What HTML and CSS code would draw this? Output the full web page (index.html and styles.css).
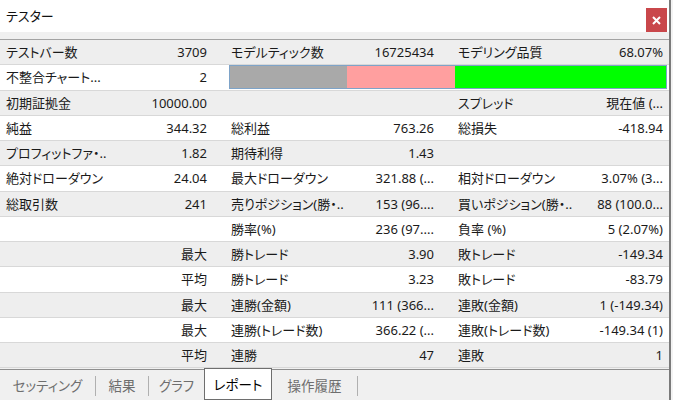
FILE: index.html
```html
<!DOCTYPE html>
<html lang="ja">
<head>
<meta charset="utf-8">
<title>テスター</title>
<link rel="stylesheet" href="styles.css">
</head>
<body>
<div class="window">
  <div class="titlebar">
    <span class="title">テスター</span>
    <div class="close"><svg width="9" height="9" viewBox="0 0 9 9"><path d="M1 1 L8 8 M8 1 L1 8" stroke="#fff" stroke-width="2" fill="none"/></svg></div>
  </div>
  <div class="strip"></div>
  <div class="table">
    <div class="row alt"><span class="lab c1">テストバー数</span><span class="val c2">3709</span><span class="lab c3">モデルティック数</span><span class="val c4">16725434</span><span class="lab c5">モデリング品質</span><span class="val c6">68.07%</span></div>
    <div class="row"><span class="lab c1">不整合チャート...</span><span class="val c2">2</span><div class="bar"><span class="seg gray"></span><span class="seg pink"></span><span class="seg green"></span></div></div>
    <div class="row alt"><span class="lab c1">初期証拠金</span><span class="val c2">10000.00</span><span class="lab c3"></span><span class="val c4"></span><span class="lab c5">スプレッド</span><span class="val c6">現在値 (...</span></div>
    <div class="row"><span class="lab c1">純益</span><span class="val c2">344.32</span><span class="lab c3">総利益</span><span class="val c4">763.26</span><span class="lab c5">総損失</span><span class="val c6">-418.94</span></div>
    <div class="row alt"><span class="lab c1">プロフィットファ・..</span><span class="val c2">1.82</span><span class="lab c3">期待利得</span><span class="val c4">1.43</span><span class="lab c5"></span><span class="val c6"></span></div>
    <div class="row"><span class="lab c1">絶対ドローダウン</span><span class="val c2">24.04</span><span class="lab c3">最大ドローダウン</span><span class="val c4">321.88 (...</span><span class="lab c5">相対ドローダウン</span><span class="val c6">3.07% (3...</span></div>
    <div class="row alt"><span class="lab c1">総取引数</span><span class="val c2">241</span><span class="lab c3">売りポジション(勝・..</span><span class="val c4">153 (96....</span><span class="lab c5">買いポジション(勝・..</span><span class="val c6">88 (100.0...</span></div>
    <div class="row"><span class="lab c1"></span><span class="val c2"></span><span class="lab c3">勝率(%)</span><span class="val c4">236 (97....</span><span class="lab c5">負率 (%)</span><span class="val c6">5 (2.07%)</span></div>
    <div class="row alt"><span class="lab c1"></span><span class="val c2">最大</span><span class="lab c3">勝トレード</span><span class="val c4">3.90</span><span class="lab c5">敗トレード</span><span class="val c6">-149.34</span></div>
    <div class="row"><span class="lab c1"></span><span class="val c2">平均</span><span class="lab c3">勝トレード</span><span class="val c4">3.23</span><span class="lab c5">敗トレード</span><span class="val c6">-83.79</span></div>
    <div class="row alt"><span class="lab c1"></span><span class="val c2">最大</span><span class="lab c3">連勝(金額)</span><span class="val c4">111 (366...</span><span class="lab c5">連敗(金額)</span><span class="val c6">1 (-149.34)</span></div>
    <div class="row"><span class="lab c1"></span><span class="val c2">最大</span><span class="lab c3">連勝(トレード数)</span><span class="val c4">366.22 (...</span><span class="lab c5">連敗(トレード数)</span><span class="val c6">-149.34 (1)</span></div>
    <div class="row alt"><span class="lab c1"></span><span class="val c2">平均</span><span class="lab c3">連勝</span><span class="val c4">47</span><span class="lab c5">連敗</span><span class="val c6">1</span></div>
  </div>
  <div class="tabs">
    <span class="tab t1">セッティング</span>
    <span class="sep"></span>
    <span class="tab t2">結果</span>
    <span class="sep"></span>
    <span class="tab t3">グラフ</span>
    <span class="tab t4 active">レポート</span>
    <span class="tab t5">操作履歴</span>
    <span class="sep"></span>
  </div>
</div>
</body>
</html>
```

FILE: styles.css
```css
html, body {
  margin: 0;
  padding: 0;
}
body {
  background: #f3f3f3;
  font-family: "Noto Sans", "Noto Sans CJK JP", sans-serif;
  font-feature-settings: "palt";
  color: #1a1a1a;
}
.window {
  width: 669px;
  height: 400px;
  border-right: 2px solid #7a7a7a;
  background: #f0f0f0;
  display: flex;
  flex-direction: column;
  overflow: hidden;
}
.titlebar {
  height: 32px;
  flex: none;
  background: #fff;
  display: flex;
  align-items: center;
  justify-content: space-between;
  padding-left: 6px;
}
.title {
  font-size: 13px;
  color: #111;
  margin-top: -2px;
}
.close {
  align-self: flex-end;
  width: 21px;
  height: 24px;
  margin-right: 2px;
  background: #c9474b;
  display: flex;
  align-items: center;
  justify-content: center;
}
.strip {
  height: 7px;
  flex: none;
  background: #f0f0f0;
  border-bottom: 1px solid #a3a3a3;
}
.table {
  flex: none;
}
.row {
  display: grid;
  grid-template-columns: 112px 115px 123px 104px 126px 1fr;
  height: 25.25px;
  box-sizing: border-box;
  border-bottom: 1px solid #d8d8d8;
  background: #fff;
  align-items: center;
  font-size: 13px;
  line-height: 24px;
}
.row.alt {
  background: #eeeeee;
}
.lab, .val {
  white-space: nowrap;
  overflow: hidden;
}
.val {
  text-align: right;
}
.c1 { padding-left: 6px; }
.c3, .c5 { padding-left: 4px; }
.c2, .c4 { padding-right: 20px; }
.c6 { padding-right: 6px; }
.bar {
  grid-column: 3 / 7;
  display: flex;
  height: 24px;
  box-sizing: border-box;
  margin: 0 2px 0 2px;
  border: 1px solid #7ea3c8;
}
.seg { display: block; height: 100%; }
.gray { width: 117px; background: #a9a9a9; }
.pink { width: 108px; background: #ff9f9f; }
.green { flex: 1; background: #00ff00; }
.tabs {
  flex: 1;
  margin-top: 1px;
  border-top: 1px solid #8e8e8e;
  display: flex;
  align-items: flex-start;
  background: #f0f0f0;
}
.tab {
  height: 30px;
  box-sizing: border-box;
  display: flex;
  align-items: center;
  justify-content: center;
  font-size: 13.5px;
  color: #6e6e6e;
}
.t1 { width: 95px; }
.t2 { width: 52px; }
.t3 { width: 55px; }
.t4 { width: 68px; }
.t5 { width: 85px; }
.active {
  background: #fff;
  color: #000;
  border: 1px solid #6e6e6e;
  margin-top: -2px;
  height: 32px;
}
.sep {
  width: 1px;
  height: 20px;
  margin-top: 6px;
  background: #b0b0b0;
}
```
